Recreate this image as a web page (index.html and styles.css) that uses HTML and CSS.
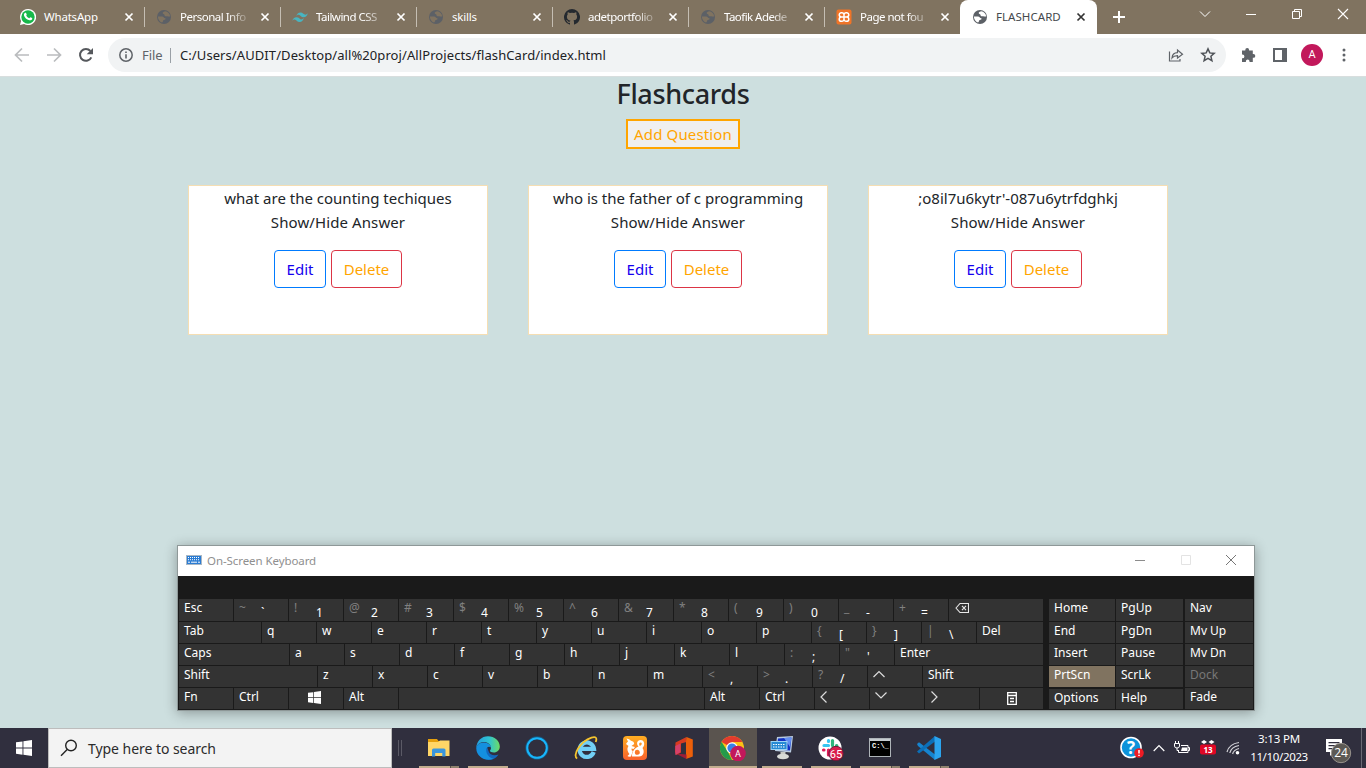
FILE: index.html
```html
<!DOCTYPE html>
<html lang="en">
<head>
<meta charset="utf-8">
<title>FLASHCARD</title>
<link rel="stylesheet" href="styles.css">
</head>
<body>
<svg class="defs" width="0" height="0">
  <symbol id="globe" viewBox="0 0 16 16"><circle cx="8" cy="8" r="7" fill="#5c6066"/><path class="land" d="M9.200 2.300C7 2.600 6.200 3.900 7 4.800c.6.600 1.500.3 1.500 1.200 0 1 .9 1.500 2 1.300 1-.2 1.700.4 3.700.2C13.900 4.600 11.900 2.700 9.200 2.300zM1.900 7.600h4.200c1.400 0 1.300 1.200 2.300 1.300 1.300.1 1.500.9.800 1.600-.8.700-2 .3-2.200 1.400-.1.800-.4 1.300-1 1.700C3.600 12.800 1.900 10.500 1.900 7.600z"/></symbol>
  <symbol id="close" viewBox="0 0 10 10"><path d="M1.500 1.500l7 7m0-7l-7 7" fill="none" stroke="currentColor" stroke-width="1.700"/></symbol>
  <symbol id="win" viewBox="0 0 16 16"><path fill="#fff" d="M0 2.300 6.500 1.400V7.600H0zM7.400 1.300 16 0v7.600H7.400zM0 8.500h6.500v6.200L0 13.800zM7.400 8.500H16V16l-8.600-1.200z"/></symbol>
</svg>

<header class="tabstrip">
  <div class="tab first"><svg class="fav" viewBox="0 0 16 16"><path fill="#fff" d="M8 0a8 8 0 0 0-6.900 12L0 16l4.100-1.100A8 8 0 1 0 8 0z"/><circle cx="8" cy="8" r="6.700" fill="#17b84a"/><path fill="#fff" d="M5.200 3.800c.7-.4 1 .1 1.500 1.600.2.500-.6 1-.4 1.300.7 1.300 1.600 2 2.900 2.500.4.200.8-1 1.200-.9 1.900.8 2 .8 1.800 1.600-.3 1.200-1.700 1.600-2.900 1.300C6.600 10.500 4.600 8.500 4 6.400c-.3-1.100.3-2.200 1.200-2.600z"/></svg><span class="name">WhatsApp</span><svg class="x"><use href="#close"/></svg></div>
  <div class="tab"><svg class="fav"><use href="#globe"/></svg><span class="name fade">Personal Info</span><svg class="x"><use href="#close"/></svg></div>
  <div class="tab"><svg class="fav" viewBox="0 0 16 16"><path fill="#48b5c1" d="M4.200 7.300Q5.200 3.400 8.500 3.400C11 3.400 11.300 5 12.700 5.600Q14.400 6.200 15.800 4.300 14.800 8.200 11.600 8.200C9 8.200 8.700 6.600 7.300 6 6 5.500 5 6 4.200 7.300zM.2 12.100Q1.200 8.200 4.500 8.200C7 8.200 7.300 9.800 8.700 10.400q1.700.6 3.100-1.300-1 3.900-4.200 3.900C5 13 4.700 11.400 3.300 10.800 2 10.300 1 10.800.2 12.100z"/></svg><span class="name fade">Tailwind CSS</span><svg class="x"><use href="#close"/></svg></div>
  <div class="tab"><svg class="fav"><use href="#globe"/></svg><span class="name">skills</span><svg class="x"><use href="#close"/></svg></div>
  <div class="tab"><svg class="fav" viewBox="0 0 16 16"><path fill="#24292f" d="M8 0a8 8 0 0 0-2.500 15.600c.4.100.5-.2.500-.4v-1.400c-2.200.5-2.700-1-2.700-1-.4-.9-.9-1.200-.9-1.200-.7-.5.100-.5.100-.5.800.1 1.200.8 1.200.8.700 1.200 1.900.9 2.300.7.100-.5.300-.9.500-1.100-1.800-.2-3.600-.9-3.600-4 0-.9.300-1.600.8-2.100-.1-.2-.4-1 .1-2.100 0 0 .7-.2 2.200.8a7.500 7.500 0 0 1 4 0c1.500-1 2.200-.8 2.200-.8.400 1.100.2 1.900.1 2.100.5.600.8 1.300.8 2.100 0 3.100-1.900 3.700-3.700 3.900.3.300.6.800.6 1.500v2.300c0 .200.100.500.500.400A8 8 0 0 0 8 0z"/></svg><span class="name fade">adetportfolio</span><svg class="x"><use href="#close"/></svg></div>
  <div class="tab"><svg class="fav"><use href="#globe"/></svg><span class="name fade tight">Taofik Adede</span><svg class="x"><use href="#close"/></svg></div>
  <div class="tab"><svg class="fav" viewBox="0 0 16 16"><rect x=".5" y=".5" width="15" height="15" rx="2" fill="#f07427"/><path d="M5 3.700h.8A2.100 2.100 0 0 1 8 5.800v4.400a2.100 2.100 0 0 1-2.200 2.100H5.200A2.100 2.100 0 0 1 3.200 10.200Q3.200 8 5.600 8 3.200 8 3.200 5.800A2.100 2.100 0 0 1 5 3.700zM11 3.700h-.8A2.100 2.100 0 0 0 8 5.800v4.400a2.100 2.100 0 0 0 2.200 2.100h.6a2.100 2.100 0 0 0 2-2.100Q12.800 8 10.400 8q2.400 0 2.400-2.200A2.100 2.100 0 0 0 11 3.700zM5.500 8h5" fill="none" stroke="#fff" stroke-width="1.500"/></svg><span class="name fade">Page not fou</span><svg class="x"><use href="#close"/></svg></div>
  <div class="tab active"><svg class="fav"><use href="#globe"/></svg><span class="name">FLASHCARD</span><svg class="x"><use href="#close"/></svg></div>
  <svg class="plus" viewBox="0 0 12 12"><path d="M6 0v12M0 6h12" stroke="#fff" stroke-width="2"/></svg>
  <div class="winctl">
    <svg width="12" height="12"><path d="M1 3.500l5 5 5-5" fill="none" stroke="#fff"/></svg>
    <svg width="12" height="12"><path d="M1 6.500h10" stroke="#fff"/></svg>
    <svg width="12" height="12"><path d="M1.500 3.500h7v7h-7zM3.500 3.500v-2h7v7h-2" fill="none" stroke="#fff"/></svg>
    <svg width="12" height="12"><path d="M1 1l10 10M11 1L1 11" stroke="#fff" stroke-width="1.100"/></svg>
  </div>
</header>

<div class="toolbar">
  <div class="nav">
    <svg width="16" height="16"><path d="M15 8H2M8 1.500L1.500 8 8 14.500" fill="none" stroke="#babcbe" stroke-width="1.700"/></svg>
    <svg width="16" height="16"><path d="M1 8h13M8 1.500L14.500 8 8 14.500" fill="none" stroke="#babcbe" stroke-width="1.700"/></svg>
    <svg width="16" height="16"><path d="M13.300 10.300A5.900 5.900 0 1 1 12.400 4" fill="none" stroke="#55585c" stroke-width="2"/><path d="M15 1v6.300H8.700z" fill="#55585c"/></svg>
  </div>
  <div class="omnibox">
    <svg width="14" height="14"><circle cx="7" cy="7" r="6.200" fill="none" stroke="#5f6368" stroke-width="1.500"/><path d="M7 6.200v4.300M7 3.400v1.500" stroke="#5f6368" stroke-width="1.600"/></svg>
    <span class="scheme">File</span><span class="url">C:/Users/AUDIT/Desktop/all%20proj/AllProjects/flashCard/index.html</span>
    <svg class="share" width="16" height="14"><path d="M1.500 3.500V13h10.500v-2M4 10C4.300 6.500 6.500 4.800 9.500 4.700V2L14.500 6.300 9.500 10V7.700C7 7.700 5.300 8.300 4 10z" fill="none" stroke="#5f6368" stroke-width="1.200"/></svg>
    <svg width="16" height="16"><path d="M8 1.900l1.800 4 4.400.5-3.300 2.900 1 4.300L8 11.300l-3.900 2.300 1-4.300L1.800 6.400l4.400-.5z" fill="none" stroke="#4f5358" stroke-width="1.500"/></svg>
  </div>
  <div class="actions">
    <svg width="16" height="16"><path fill="#5f6368" d="M2 3.500h3.300V3a1.900 1.900 0 0 1 3.800 0v.5H12.800V7h.6a1.900 1.900 0 0 1 0 3.800h-.6V15H9.500v-.7a1.800 1.800 0 0 0-3.600 0v.7H2v-3.700h.5a1.900 1.900 0 0 0 0-3.800H2z"/></svg>
    <svg width="14" height="14"><path d="M1 1h12v12H1z" fill="#fff" stroke="#5f6368" stroke-width="2"/><path d="M9 1h4v12H9z" fill="#5f6368"/></svg>
    <span class="avatar">A</span>
    <svg width="4" height="14"><circle cx="2" cy="2" r="1.500"/><circle cx="2" cy="7" r="1.500"/><circle cx="2" cy="12" r="1.500"/></svg>
  </div>
</div>

<main class="page">
  <h1>Flashcards</h1>
  <button class="add">Add Question</button>
  <section class="cards">
    <article class="card"><p>what are the counting techiques</p><p class="toggle">Show/Hide Answer</p><div class="btns"><button class="edit">Edit</button><button class="del">Delete</button></div></article>
    <article class="card"><p>who is the father of c programming</p><p class="toggle">Show/Hide Answer</p><div class="btns"><button class="edit">Edit</button><button class="del">Delete</button></div></article>
    <article class="card"><p>;o8il7u6kytr'-087u6ytrfdghkj</p><p class="toggle">Show/Hide Answer</p><div class="btns"><button class="edit">Edit</button><button class="del">Delete</button></div></article>
  </section>
</main>

<section class="osk">
  <div class="osk-title">
    <svg width="16" height="10"><rect x=".5" y=".5" width="15" height="9" fill="#2b7cd3" stroke="#a9b7c4"/><path d="M2 2.500h12M2 4.700h12" stroke="#fff" stroke-dasharray="1 1"/><path d="M2 7.200h2M5 7.200h6M12 7.200h2" stroke="#fff"/></svg>
    <span>On-Screen Keyboard</span>
    <div class="osk-ctl">
      <svg width="12" height="12"><path d="M1 6.500h10" stroke="#8c8c8c"/></svg>
      <svg width="12" height="12"><path d="M1.500 1.500h9v9h-9z" fill="none" stroke="#e3e3e3"/></svg>
      <svg width="12" height="12"><path d="M1 1l10 10M11 1L1 11" stroke="#777"/></svg>
    </div>
  </div>
  <div class="osk-body">
    <div class="main-keys">
      <div class="row r1"><b>Esc</b><b class="two"><i>~</i>`</b><b class="two"><i>!</i>1</b><b class="two"><i>@</i>2</b><b class="two"><i>#</i>3</b><b class="two"><i>$</i>4</b><b class="two"><i>%</i>5</b><b class="two"><i>^</i>6</b><b class="two"><i>&amp;</i>7</b><b class="two"><i>*</i>8</b><b class="two"><i>(</i>9</b><b class="two"><i>)</i>0</b><b class="two"><i>_</i>-</b><b class="two"><i>+</i>=</b><b class="grow"><svg class="bksp" width="14" height="12"><path d="M1 6l4-4.500h8.500v9H5zM7 3.800l4 4.400M11 3.800L7 8.200" fill="none" stroke="#e8e8e8" stroke-width="1.100"/></svg></b></div>
      <div class="row"><b class="w-tab">Tab</b><b>q</b><b>w</b><b>e</b><b>r</b><b>t</b><b>y</b><b>u</b><b>i</b><b>o</b><b>p</b><b class="two"><i>{</i>[</b><b class="two"><i>}</i>]</b><b class="two"><i>|</i>\</b><b class="grow">Del</b></div>
      <div class="row"><b class="w-caps">Caps</b><b>a</b><b>s</b><b>d</b><b>f</b><b>g</b><b>h</b><b>j</b><b>k</b><b>l</b><b class="two"><i>:</i>;</b><b class="two"><i>"</i>'</b><b class="grow">Enter</b></div>
      <div class="row"><b class="w-shift">Shift</b><b>z</b><b>x</b><b>c</b><b>v</b><b>b</b><b>n</b><b>m</b><b class="two"><i>&lt;</i>,</b><b class="two"><i>&gt;</i>.</b><b class="two"><i>?</i>/</b><b><svg class="arr" width="12" height="12"><path d="M0.500 8L6 2.500l5.500 5.500"/></svg></b><b class="grow">Shift</b></div>
      <div class="row"><b>Fn</b><b>Ctrl</b><b class="mid logo"><svg width="13" height="13"><use href="#win"/></svg></b><b>Alt</b><b class="w-space"></b><b>Alt</b><b>Ctrl</b><b><svg class="arr" width="12" height="12"><path d="M6.500 0.500L1 6l5.500 5.500"/></svg></b><b><svg class="arr" width="12" height="12"><path d="M0.500 1.500L6 7l5.500-5.500"/></svg></b><b><svg class="arr" width="12" height="12"><path d="M1.500 0.500L7 6l-5.500 5.500"/></svg></b><b class="grow mid menu"><svg width="10" height="13"><path d="M.7.700h8.600v11.600H.7zM.7 3.500h8.600M3 6.500h4M3 9.500h4" fill="none" stroke="#fff" stroke-width="1.300"/></svg></b></div>
    </div>
    <div class="side-keys">
      <div class="row r1"><b>Home</b><b>PgUp</b><b>Nav</b></div>
      <div class="row"><b>End</b><b>PgDn</b><b>Mv Up</b></div>
      <div class="row"><b>Insert</b><b>Pause</b><b>Mv Dn</b></div>
      <div class="row"><b class="on">PrtScn</b><b>ScrLk</b><b class="dim">Dock</b></div>
      <div class="row last"><b>Options</b><b>Help</b><b>Fade</b></div>
    </div>
  </div>
</section>

<footer class="taskbar">
  <div class="start"><svg width="16" height="16"><use href="#win"/></svg></div>
  <div class="search"><svg width="18" height="18"><circle cx="11" cy="6.500" r="5.300" fill="none" stroke="#222" stroke-width="1.400"/><path d="M7.200 10.500L1 16.800" stroke="#222" stroke-width="1.400"/></svg><span>Type here to search</span></div>
  <div class="grip"></div>
  <div class="apps">
    <div class="app run multi"><svg width="24" height="24"><path fill="#e5a00d" d="M1 3h9l1.500 2H22v5H1z"/><path fill="#ffd667" d="M1 6h10l2-1.500h9.500V20H1z"/><path fill="#3a96dd" d="M5 20.500v-6.500Q5 12.500 6.500 12.500h10.500q1.500 0 1.500 1.500v6.500h-3.200V17H8.200v3.500z"/></svg></div>
    <div class="app run"><svg width="24" height="24"><defs><linearGradient id="eg"><stop offset="0" stop-color="#249ede"/><stop offset=".55" stop-color="#2fc3d2"/><stop offset="1" stop-color="#6edc63"/></linearGradient></defs><path fill="#1267bd" d="M.5 10C1 18 6 23.800 13 23.800c4.500 0 7.800-2.400 9.500-5.300-3.500 1.500-9 1-10-3.500L10 8z"/><path fill="#1490df" d="M.3 12.500C.5 8 5 6 9 6.500c3.500.5 6 2.500 6 5-2-1.500-4.500-.5-4.800 2-.3 4 2.800 8.500 7.300 9.200C10 26 .3 21 .3 12.500z"/><path fill="url(#eg)" d="M.3 12C.5 5 5.500.2 12 .2S23.800 5 23.800 10.500c0 3.500-2.700 6-6 6-2.300 0-3.800-.8-3.800-1.700 0-.7 1-1 1-3C15 8.500 11.500 5.900 8 6 4 6 1 8.500.3 12z"/></svg></div>
    <div class="app"><svg width="24" height="24"><circle cx="12" cy="12" r="10.200" fill="none" stroke="#086fa5" stroke-width="3" opacity=".6"/><circle cx="12" cy="12" r="9.800" fill="none" stroke="#18b5fb" stroke-width="2"/></svg></div>
    <div class="app"><svg width="24" height="24"><path d="M19.700 16A7.200 7.200 0 1 1 20 12.800H7.500" fill="none" stroke="#72d0f6" stroke-width="4.200"/><path d="M3.200 22.500C-2 20 6 5.500 17.500 1.600 22 .2 23.300 2 21.700 6" fill="none" stroke="#f6c52e" stroke-width="1.800"/></svg></div>
    <div class="app"><svg width="24" height="24"><defs><linearGradient id="ucg" x2="0" y2="1"><stop offset="0" stop-color="#ffae22"/><stop offset="1" stop-color="#f8602c"/></linearGradient></defs><rect width="24" height="24" rx="4" fill="url(#ucg)"/><path fill="#fff" d="M3.500 2.500q3 .3 4.500 2.300 3 .5 3.200 3.200L8.500 10l3.500 1-1.500 2-2-.6q-.3 2 1.300 2.600L8 20.500q-2.500.5-3.500-.5l2-2C4 15 4 12 5.500 10L3 8q1-2 2-2.500z"/><path fill="#fff" fill-rule="evenodd" d="M15.500 10.500C13 8 14 4 17.500 4c4 0 5 5 2 8 2.500 3.500 1 8.500-3.500 8.500h-7C9 16 11 12.500 15.500 10.500zM17.300 6.500q-2 .5-.5 3.500 2-.7 2-2.200 0-1.200-1.500-1.300zM14.500 13.700a2.500 2.500 0 1 0 2.300 2.300q-.2-2-2.300-2.300z"/></svg></div>
    <div class="app"><svg width="24" height="24"><path fill="#d83b20" d="M3.500 6.500L14.500 1v5L9 7.500v9L4.500 19 3 16z"/><path fill="#ec5f0a" d="M14.500 1L20.800 3.500v17L14 23V5z"/><path fill="#9c1d36" d="M3.500 17.500l11 1V23z"/><path fill="#d5406a" d="M3.300 10l5-2.500v8.700L3.300 19z"/></svg></div>
    <div class="app run wide"><svg width="26" height="26"><circle cx="12" cy="13" r="12" fill="#fbc116"/><path fill="#e33b2e" d="M12 13L1.600 7A12 12 0 0 1 22.400 7H12z"/><path fill="#249b4a" d="M1.600 7L8 17l4 8A12 12 0 0 1 1.600 7z"/><circle cx="12" cy="13" r="5.800" fill="#fff"/><circle cx="12" cy="13" r="4.600" fill="#397fe7"/><circle cx="18" cy="18.500" r="7.800" fill="#c2185b"/><text x="18" y="22" text-anchor="middle" class="mini">A</text></svg></div>
    <div class="app run"><svg width="24" height="24"><path fill="#b9cbe0" d="M7 1l16-1-2 16.500L5 15z"/><path fill="#1231c4" d="M8 2.500L21.500 1.500 20 14.500 6.500 13.500z"/><path fill="#638ff1" d="M14 2l7.500-.5L20 11z"/><path fill="#c7c9c5" d="M10.500 16h5v4h-5z"/><ellipse cx="13" cy="20.500" rx="6" ry="2.800" fill="#d8dad7"/><rect x="1" y="5.500" width="16" height="8" fill="#278ad4" stroke="#9ed3f4"/><path d="M3 8.500h12M3 11h12" stroke="#fff" stroke-width="1.200" stroke-dasharray="1.500 1"/></svg></div>
    <div class="app run"><svg width="26" height="26"><circle cx="12" cy="13" r="11.500" fill="#fff"/><g stroke-width="3.200" stroke-linecap="round"><path d="M6 10.500h4.500M10.500 5.500v1" stroke="#36c5f0"/><path d="M14.500 5.500v5M18.500 10.500h.3" stroke="#2eb67d"/><path d="M5.500 15h.5M10.500 15v5" stroke="#e01e5a"/><path d="M14.500 15h4" stroke="#ecb22e"/></g><circle cx="18" cy="18.500" r="7.200" fill="#d91d4c" stroke="#6b1838"/><text x="18" y="22.500" text-anchor="middle" class="mini num">65</text></svg></div>
    <div class="app run multi"><svg width="24" height="24"><rect x="1.500" y="2.500" width="21" height="18" fill="#000" stroke="#aeb4b8"/><path d="M2 4h20" stroke="#c6ccd0" stroke-width="2"/><text x="4" y="11.500" class="cmd">C:\_</text></svg></div>
    <div class="app run multi"><svg width="24" height="24"><path fill="#1684cf" d="M0 8l2-1.700L18 18.500V24L1 10z"/><path fill="#0b6fb8" d="M0 15.500l2 2L18 5.500V0z"/><path fill="#2ba4ee" d="M17.500 0L24 3v18l-6.500 3z"/></svg></div>
  </div>
  <div class="tray">
    <svg width="24" height="24"><circle cx="11" cy="11.500" r="10" fill="#0d93da" stroke="#fff" stroke-width="1.600"/><text x="11" y="17.500" text-anchor="middle" class="help">?</text><circle cx="19" cy="17" r="4.800" fill="#ed1b24"/><path d="M19 14v3.500M19 18.700v1.300" stroke="#fff" stroke-width="1.500"/></svg>
    <svg class="t-chev" width="12" height="8"><path d="M.7 7L6 1.500 11.300 7" fill="none" stroke="#fff" stroke-width="1.200"/></svg>
    <svg class="t-bat" width="17" height="14"><path d="M7 4.500H14v7H4.500V9M14 6.500h1.500v3H14M.5 2.500h5V5Q5.500 7 3 7T.5 5zM1.500 0v2.500M4.500 0v2.500M3 7v2.500h1.500" fill="none" stroke="#fff"/><path d="M8 6.500h5v3.500H7z" fill="#fff"/></svg>
    <svg class="t-13" width="18" height="18"><path fill="#fff" d="M2 3l3-2 3 2-3 2zM9.500 3l3-2 3 2-3 2z"/><rect x="1" y="5.500" width="16" height="10" rx="2" fill="#df0624"/><text x="9" y="13.500" text-anchor="middle" class="n13">13</text></svg>
    <svg class="t-wifi" width="14" height="14"><g fill="none" stroke="#d3d3d8" stroke-width="1.200"><path d="M1 11Q3 3 13 1.500M3.800 12Q5 6 13 4.500M6.600 13Q7.500 9 13 7.500"/></g><circle cx="11.500" cy="11.800" r="1.800" fill="#fff"/></svg>
    <div class="clock"><span class="time">3:13 PM</span><span>11/10/2023</span></div>
    <svg class="t-note" width="28" height="26"><path fill="#fff" d="M1 1h16v13H9l-4 4v-4H1z"/><path d="M3.500 4.700h11M3.500 7.700h11M3.500 10.700h11" stroke="#302f3e" stroke-width="1.200"/><circle cx="16" cy="15" r="9.700" fill="#5c5954" stroke="#98938c"/><text x="16" y="19" text-anchor="middle" class="n24">24</text></svg>
  </div>
</footer>
</body>
</html>
```
FILE: styles.css
```css
* { box-sizing: border-box; }
body {
  margin: 0; width: 1366px; height: 768px; overflow: hidden;
  display: flex; flex-direction: column;
  background: #cddfdf; color: #212529;
  font-family: "Noto Sans", "Open Sans", sans-serif; font-size: 15px;
}
svg { flex: none; display: block; }
.defs { position: absolute; }
button { font: inherit; margin: 0; }

/* Tab strip */
.tabstrip { height: 34px; flex: none; background: #807360; display: flex; padding-left: 8px; --land: #807360; }
.tab {
  width: 136px; height: 34px; display: flex; align-items: center;
  padding-left: 12px; color: #fff; font-size: 11.5px;
  background: linear-gradient(#c5beb3, #c5beb3) 0 7px / 1px 20px no-repeat;
}
.tab.first { background: none; }
.fav { width: 16px; height: 16px; margin-right: 8px; }
.land { fill: var(--land); }
.name { width: 69px; white-space: nowrap; letter-spacing: -.2px; line-height: 20px; }
.fade { letter-spacing: -.5px; -webkit-mask-image: linear-gradient(90deg, #000 68%, rgba(0, 0, 0, .15)); mask-image: linear-gradient(90deg, #000 68%, rgba(0, 0, 0, .15)); }
.tight { letter-spacing: -.55px; }
.x { width: 10px; height: 10px; margin-left: 11px; color: #fff; }
.tab.active { width: 137px; background: #fff; color: #45494d; border-radius: 8px 8px 0 0; --land: #fff; }
.tab.active .x { color: #333; }
.tab.active .name { letter-spacing: .05px; }
.plus { width: 12px; height: 12px; margin: 11px 0 0 16px; }
.winctl { margin-left: auto; display: flex; gap: 34px; padding: 8px 17px 0 0; }

/* Toolbar */
.toolbar { height: 42px; flex: none; background: #fff; display: flex; align-items: center; }
.nav { width: 108px; display: flex; gap: 16px; padding-left: 14px; }
.omnibox {
  width: 1118px; height: 34px; border-radius: 17px; background: #f1f3f4;
  display: flex; align-items: center; padding: 0 10px 0 11px;
}
.scheme { color: #5f6368; font-size: 13px; margin-left: 9px; width: 29px; border-right: 1px solid #9aa0a6; line-height: 15px; letter-spacing: -.1px; }
.url { color: #202124; font-size: 13px; margin-left: 9px; letter-spacing: .085px; white-space: nowrap; }
.share { margin-left: auto; margin-right: 16px; }
.actions { display: flex; align-items: center; padding-left: 14px; }
.actions svg:nth-child(2) { margin: 0 14px 0 17px; }
.actions svg:last-child { margin-left: 19px; fill: #5f6368; }
.avatar { width: 22px; height: 22px; border-radius: 50%; background: #c2185b; color: #fff; font: 11px/22px Roboto, sans-serif; text-align: center; }

/* Page */
.page { flex: 1; border-top: 1px solid #d8dede; display: flex; flex-direction: column; align-items: center; }
h1 { margin: 0; font-size: 27px; font-weight: 500; line-height: 34px; letter-spacing: -.35px; }
.add { width: 114px; height: 30px; margin-top: 8px; padding: 0; border: 2px solid orange; background: #efefef; color: orange; line-height: 26px; letter-spacing: .13px; }
.cards { display: flex; gap: 40px; margin: 36px 10px 0 0; }
.card { width: 300px; height: 150px; background: #fff; border: 1px solid #f5deb3; text-align: center; }
.card p { margin: 0; line-height: 24px; white-space: nowrap; }
.card .toggle { letter-spacing: .1px; }
.btns { display: flex; justify-content: center; gap: 5px; margin-top: 16px; }
.btns button { height: 38px; padding: 0; border-radius: 4px; background: #fff; line-height: 36px; }
.edit { width: 52px; border: 1px solid #007bff; color: #1400ee; }
.del { width: 71px; border: 1px solid #dc3545; color: orange; }

/* On-screen keyboard */
.osk {
  position: absolute; left: 177px; top: 545px; width: 1078px; height: 166px;
  border: 1px solid #8e9898; background: #1a1a1a; box-shadow: 0 2px 12px rgba(0, 0, 0, .32);
}
.osk-title { height: 30px; background: #fff; display: flex; align-items: center; padding: 0 17px 2px 8px; font-size: 11.5px; color: #8f8f8f; }
.osk-title span { margin-left: 5px; letter-spacing: -.08px; }
.osk-ctl { display: flex; gap: 33.5px; margin-left: auto; }
.osk-body { display: flex; gap: 6px; padding: 23px 0 0 1px; }
.main-keys { width: 864px; display: grid; gap: 1px; }
.row { display: flex; gap: 1px; height: 21px; }
.row.r1 { height: 22px; }
.row b {
  flex: 0 0 54px; background: #333; color: #fff; font-weight: 400; font-size: 12px;
  line-height: 18px; padding-left: 5px; display: flex; white-space: nowrap; overflow: hidden;
}
.row i { font-style: normal; color: #808080; width: 22px; line-height: 17px; }
.row .two { line-height: 26px; }
.r1 .two { line-height: 28px; }
.row .grow { flex: 1 1 0; }
.row .w-tab { flex-basis: 82px; }
.row .w-caps { flex-basis: 110px; }
.row .w-shift { flex-basis: 138px; }
.row .w-space { flex-basis: 305px; }
.row .mid { justify-content: center; align-items: center; padding: 0; }
.row .logo { padding: 0 3px 2px 0; }
.row .menu { padding: 0 0 1px; }
.arr { fill: none; stroke: #ddd; stroke-width: 1.2; margin-top: 3px; }
.bksp { margin: 3px 0 0 1px; }
.side-keys { display: grid; gap: 1px; }
.side-keys b { flex-basis: 66px; }
.side-keys b:nth-child(2) { flex-basis: 67px; }
.side-keys b:nth-child(3) { flex-basis: 68px; margin-left: 1px; }
.side-keys .on { background: #807360; }
.side-keys .dim { color: #777; }
.side-keys .last b:nth-child(-n+2) { border-top: 1px solid #1a1a1a; }

/* Taskbar */
.taskbar { height: 40px; flex: none; background: #302f3e; display: flex; color: #fff; }
.start { width: 48px; display: flex; align-items: center; justify-content: center; }
.search { width: 344px; background: #f3f3f3; border: 1px solid #bdbdbd; display: flex; align-items: center; padding-left: 11px; color: #2b2b2b; font-size: 14px; }
.search span { margin-left: 10px; letter-spacing: -.05px; }
.grip { width: 4px; height: 16px; margin: 12px 12px 0 6px; border: solid #5b5a66; border-width: 0 1px; }
.apps { display: flex; gap: 1px; padding-left: 1px; }
.app { width: 48px; height: 40px; display: flex; align-items: center; justify-content: center; }
.app.run { background: linear-gradient(#c2ad8e, #c2ad8e) 4px 38px / 40px 2px no-repeat; }
.app.multi { background: linear-gradient(90deg, #c2ad8e 31px, #574f48 31px 32px, #8f826e 32px) 4px 38px / 40px 2px no-repeat; }
.app.wide { background: linear-gradient(#c2ad8e, #c2ad8e) 0 38px / 48px 2px no-repeat #5a544f; }
.mini { font: 9px Roboto, sans-serif; fill: #fff; }
.num { font-size: 11px; }
.cmd { font: bold 7px "Liberation Mono", monospace; fill: #fff; }
.help { font: bold 17px "Open Sans", sans-serif; fill: #fff; }
.n13 { font: bold 8px "Open Sans", sans-serif; fill: #fff; }
.n24 { font: 12px "Open Sans", sans-serif; fill: #fff; }
.tray { margin-left: auto; display: flex; align-items: center; margin-right: 4px; border-right: 1px solid #6a6974; padding-right: 8px; }
.t-chev { margin-left: 9px; }
.t-bat { margin-left: 9px; }
.t-13 { margin-left: 8px; }
.t-wifi { margin-left: 9px; }
.clock { width: 60px; margin: -1px 0 0 9px; display: flex; flex-direction: column; align-items: center; font-size: 11.5px; line-height: 18px; letter-spacing: -.35px; }
.time { letter-spacing: -.2px; }
.t-note { margin: 6px 0 0 16px; }
```
